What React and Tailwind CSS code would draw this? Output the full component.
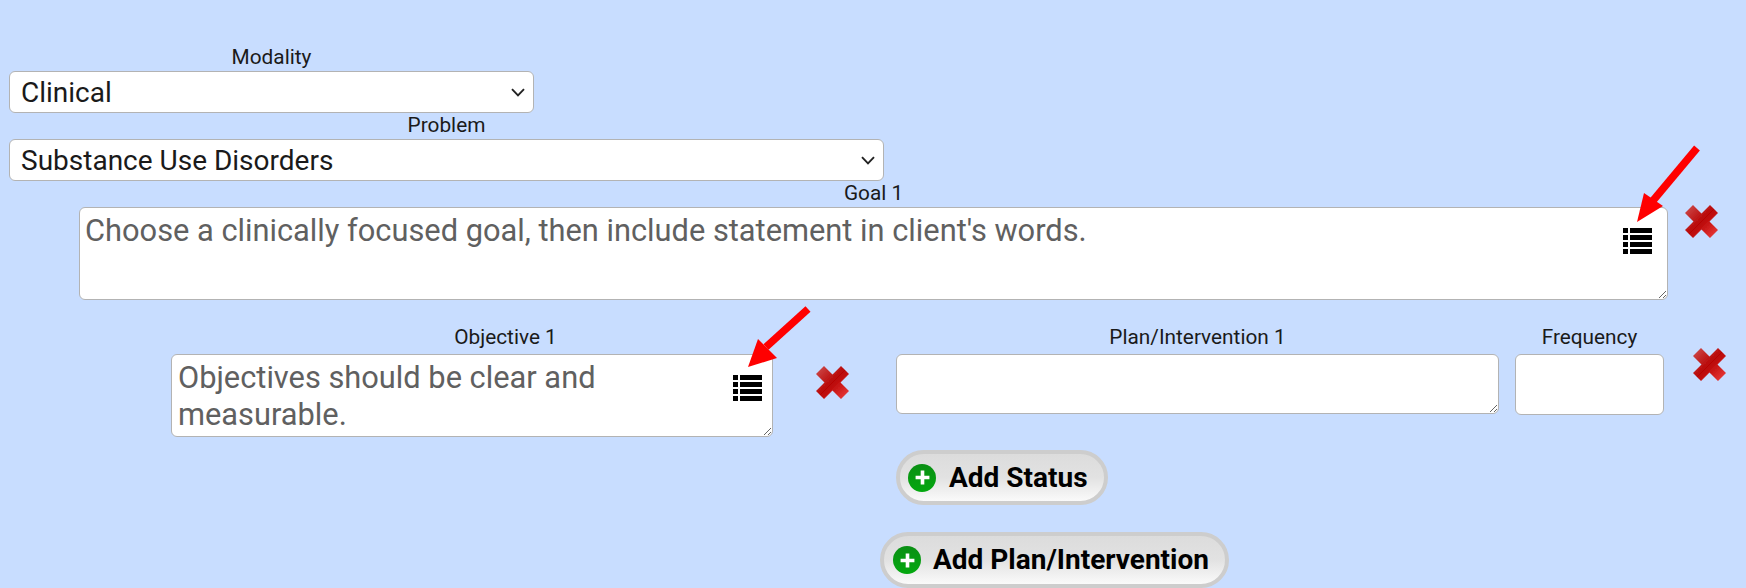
import React from 'react';

const Label = ({ children, className = '' }) => (
    <div className={`text-center text-[20.8px] leading-[25px] text-[#1a1a1a] ${className}`}>{children}</div>
);

const Select = ({ value }) => (
    <div className="relative">
        <select
            defaultValue={value}
            className="block w-full h-[42px] appearance-none bg-white border border-[#b3b3b3] rounded-md pl-[11px] pt-[2px] text-[28px] leading-[32px] text-[#1a1a1a] outline-none"
        >
            <option>{value}</option>
        </select>
        <svg viewBox="0 0 14 9" className="absolute right-[9px] top-[17px] w-[14px] h-[9px] pointer-events-none">
            <path d="M1 1.2 L7 7.4 L13 1.2" stroke="#222" strokeWidth="1.9" fill="none" />
        </svg>
    </div>
);

const ListIcon = ({ className }) => (
    <svg viewBox="0 0 29 26" className={className}>
        {[0, 7, 14, 21].map((y) => (
            <g key={y} fill="#000">
                <rect x="0" y={y} width="5" height="5" />
                <rect x="7" y={y} width="22" height="5" />
            </g>
        ))}
    </svg>
);

const RedX = ({ className }) => (
    <svg viewBox="0 0 35 35" className={className}>
        <defs>
            <linearGradient id="xfill" x1="0" y1="0" x2="1" y2="1">
                <stop offset="0" stopColor="#cf5050" />
                <stop offset="0.5" stopColor="#b80606" />
                <stop offset="1" stopColor="#f04040" />
            </linearGradient>
            <filter id="xblur"><feGaussianBlur stdDeviation="0.6" /></filter>
        </defs>
        <path
            d="M9 1 L17.5 9.5 L26 1 L34 9 L25.5 17.5 L34 26 L26 34 L17.5 25.5 L9 34 L1 26 L9.5 17.5 L1 9 Z"
            fill="url(#xfill)"
            filter="url(#xblur)"
        />
    </svg>
);

const GoalArrow = ({ className }) => (
    <svg viewBox="0 0 63 77" className={className}>
        <path d="M60 3 L14 58" stroke="#ff0000" strokeWidth="7.5" fill="none" />
        <path d="M0 77 L7 48 L26 61 Z" fill="#ff0000" />
    </svg>
);

const ObjectiveArrow = ({ className }) => (
    <svg viewBox="0 0 63 63" className={className}>
        <path d="M60 5 L18 43" stroke="#ff0000" strokeWidth="7.5" fill="none" />
        <path d="M0 63 L10 35 L29 54 Z" fill="#ff0000" />
    </svg>
);

const AddButton = ({ children, className }) => (
    <button className={`flex items-center rounded-full border-[4px] border-[#cdcdcd] bg-gradient-to-b from-[#dcdcdc] via-[#e2e2e2] to-[#fafafa] font-bold text-[28px] leading-none text-black ${className}`}>
        <span className="flex items-center justify-center w-[28px] h-[28px] rounded-full bg-gradient-to-b from-[#0a8f14] to-[#03a80f]">
            <svg viewBox="0 0 16 16" className="w-[17px] h-[17px]">
                <path d="M8 1.5 V14.5 M1.5 8 H14.5" stroke="#fff" strokeWidth="3.4" />
            </svg>
        </span>
        {children}
    </button>
);

const textareaClass =
    'block w-full bg-white border border-[#b3b3b3] rounded-md text-[30.8px] leading-[36.5px] outline-none placeholder:text-[#606060]';

const App = () => {
    return (
        <div className="w-[1746px] h-[588px] overflow-hidden bg-[#c8ddff] font-['Roboto',sans-serif] pt-[45px]">
            {/* Modality / Problem */}
            <div className="w-[525px] ml-[9px]">
                <Label className="mb-[1px]">Modality</Label>
                <Select value="Clinical" />
            </div>
            <div className="w-[875px] ml-[9px]">
                <Label className="mb-[1px]">Problem</Label>
                <Select value="Substance Use Disorders" />
            </div>

            {/* Goal */}
            <div className="flex items-start ml-[79px]">
                <div className="w-[1589px]">
                    <Label className="mb-[1px]">Goal 1</Label>
                    <div className="relative">
                        <textarea
                            className={`${textareaClass} h-[93px] px-[5px] pt-[5px]`}
                            placeholder="Choose a clinically focused goal, then include statement in client's words."
                        />
                        <ListIcon className="absolute right-[16px] top-[21px] w-[29px] h-[26px]" />
                        <GoalArrow className="absolute right-[-32px] top-[-62px] w-[63px] h-[77px]" />
                    </div>
                </div>
                <RedX className="w-[35px] h-[35px] ml-[16px] mt-[23px]" />
            </div>

            {/* Objective + Plan */}
            <div className="flex items-start ml-[171px] mt-[25px]">
                <div className="w-[602px] shrink-0">
                    <Label className="pl-[67px]">Objective 1</Label>
                    <div className="relative mt-[4px]">
                        <textarea
                            className={`${textareaClass} h-[83px] pl-[6px] pr-[60px] pt-[5px]`}
                            placeholder="Objectives should be clear and measurable."
                        />
                        <ListIcon className="absolute right-[11px] top-[21px] w-[29px] h-[26px]" />
                        <ObjectiveArrow className="absolute right-[-38px] top-[-50px] w-[63px] h-[63px]" />
                    </div>
                </div>
                <RedX className="w-[35px] h-[35px] ml-[42px] mt-[40px] shrink-0" />
                <div className="ml-[46px]">
                    <div className="flex items-start">
                        <div className="w-[603px]">
                            <Label>Plan/Intervention 1</Label>
                            <textarea className={`${textareaClass} h-[60px] mt-[4px]`} />
                        </div>
                        <div className="w-[149px] ml-[16px]">
                            <Label>Frequency</Label>
                            <input className="block w-full h-[61px] mt-[4px] bg-white border border-[#b3b3b3] rounded-md outline-none" />
                        </div>
                        <RedX className="w-[35px] h-[35px] ml-[28px] mt-[22px]" />
                    </div>
                    <AddButton className="w-[212px] h-[55px] mt-[35px] pl-[8px] gap-[13px]">Add Status</AddButton>
                    <AddButton className="w-[349px] h-[56px] mt-[27px] ml-[-16px] pl-[9px] gap-[12px]">Add Plan/Intervention</AddButton>
                </div>
            </div>
        </div>
    );
};

export default App;
